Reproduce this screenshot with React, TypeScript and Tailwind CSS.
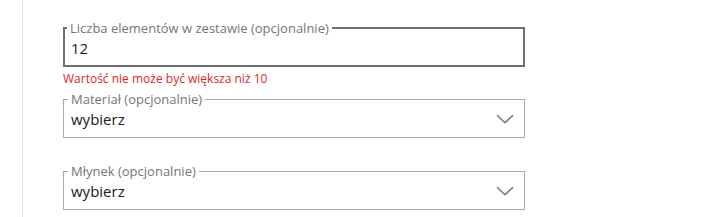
import type { ReactNode } from "react";

const font = { fontFamily: '"Open Sans", "Noto Sans", sans-serif' };

function Chevron() {
  return (
    <svg width="18" height="10" viewBox="0 0 18 10" fill="none" className="shrink-0">
      <path d="M1 1.2 9 8.8 17 1.2" stroke="#767676" strokeWidth="1.5" />
    </svg>
  );
}

interface FieldProps {
  label: string;
  children: ReactNode;
  focused?: boolean;
  select?: boolean;
}

function Field({ label, children, focused, select }: FieldProps) {
  return (
    <div
      className={
        focused
          ? "relative flex h-[40px] w-[462px] items-center border-2 border-[#707070] pl-[6px] pr-[9px]"
          : "relative flex h-[39px] w-[462px] items-center border border-[#a8a8a8] pl-[7px] pr-[10px]"
      }
    >
      <span
        className={
          focused
            ? "absolute -top-[11px] left-[2px] bg-white px-[3px] text-[13px] leading-[20px] text-[#767676]"
            : "absolute -top-[11px] left-[4px] bg-white px-[3px] text-[13px] leading-[20px] text-[#767676]"
        }
      >
        {label}
      </span>
      <span className="flex-1 pt-[1px] text-[15px] leading-[20px] text-[#222]">{children}</span>
      {select && <Chevron />}
    </div>
  );
}

export default function App() {
  return (
    <div className="h-[217px] w-[712px] bg-white pl-[22px]" style={font}>
      <div className="h-full border-l border-[#dedede] pl-[40px] pt-[27px]">
        <Field label="Liczba elementów w zestawie (opcjonalnie)" focused>
          12
        </Field>
        <p className="mt-[4px] text-[12px] leading-[16px] text-[#e0262b]">Wartość nie może być większa niż 10</p>
        <div className="mt-[12px]">
          <Field label="Materiał (opcjonalnie)" select>
            wybierz
          </Field>
        </div>
        <div className="mt-[33px]">
          <Field label="Młynek (opcjonalnie)" select>
            wybierz
          </Field>
        </div>
      </div>
    </div>
  );
}
